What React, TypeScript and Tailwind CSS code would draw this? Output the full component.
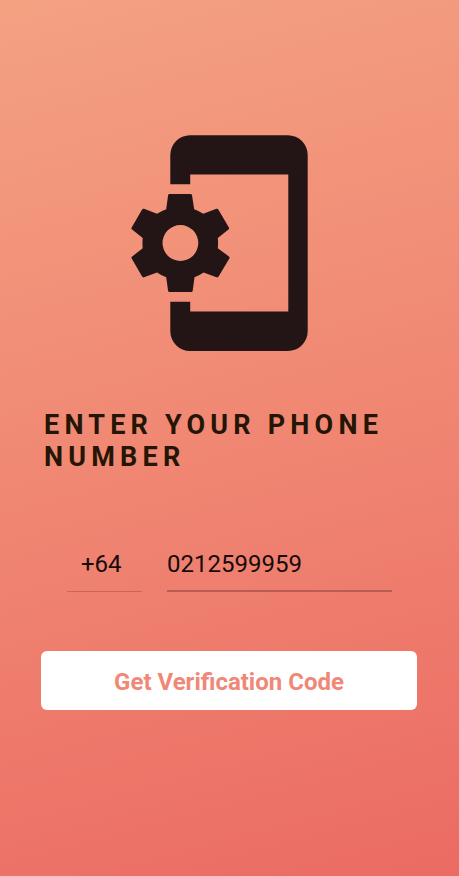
function PhoneSettingsIcon() {
  return (
    <svg width="178" height="218" viewBox="131 134 178 218" fill="#231516" aria-hidden="true">
      <path d="M170.3 184.3V155a19.7 19.7 0 0 1 19.7-19.7H288a19.7 19.7 0 0 1 19.7 19.7V331.300a19.7 19.7 0 0 1-19.7 19.7H190a19.7 19.7 0 0 1-19.7-19.7V301.700H190.200V311.500H288.300V174.500H190.200V184.300Z" />
      <path
        fillRule="evenodd"
        d="M169.500 194H190.500Q191.800 194 192 195.300L194.200 209.300Q199.300 211.200 203.300 213.700L216.400 208.800Q217.600 208.400 218.300 209.500L228.900 227.500Q229.500 228.700 228.500 229.600L217.800 238Q218.300 243 217.800 248.300L228.900 256.400Q230 257.200 229.300 258.500L218.600 276.500Q217.800 277.700 216.500 277.200L203.600 272.400Q199.400 275.300 194.500 277.200L192.700 290.700Q192.500 291.900 191.300 291.900H169.500Q168.300 291.900 168.100 290.700L166.200 277.200Q161.300 275.300 157 272.400L144 277.300Q142.800 277.700 142.100 276.600L131.700 258.500Q131 257.300 132.200 256.400L142.700 248.300Q142.200 243 142.700 238L132.100 229.600Q131 228.800 131.700 227.500L142.100 209.500Q142.900 208.400 144 208.800L157 213.700Q161.300 211.200 166.200 209.300L168.100 195.300Q168.300 194 169.500 194ZM198.300 243A17.900 17.900 0 1 0 162.500 243A17.900 17.900 0 1 0 198.300 243Z"
      />
    </svg>
  );
}

export default function App() {
  return (
    <main
      className="flex h-[876px] w-full flex-col overflow-hidden bg-[linear-gradient(165deg,#f4a182_0%,#f08773_50%,#eb6b63_100%)] pt-[134px] font-['Roboto',sans-serif]"
    >
      <div className="pl-[131px]">
        <PhoneSettingsIcon />
      </div>
      <h1 className="mt-[57px] ml-11 w-[370px] text-[27px] leading-8 font-bold tracking-[5.2px] text-[#241505]">
        ENTER YOUR PHONE NUMBER
      </h1>
      <div className="mt-[67px] ml-[67px] flex gap-[25px] text-[24px] leading-8 text-[#160b0a]">
        <div className="h-[52px] w-[75px] border-b border-[#c9665b] pt-2 pl-3.5">+64</div>
        <div className="h-[52px] w-[225px] border-b-2 border-[#b95c53] pt-2">0212599959</div>
      </div>
      <button className="mt-[59px] ml-[41px] h-[59px] w-[376px] rounded-[6px] bg-white pt-0.5 text-[24px] font-bold text-[#f08878]">
        Get Verification Code
      </button>
    </main>
  );
}
